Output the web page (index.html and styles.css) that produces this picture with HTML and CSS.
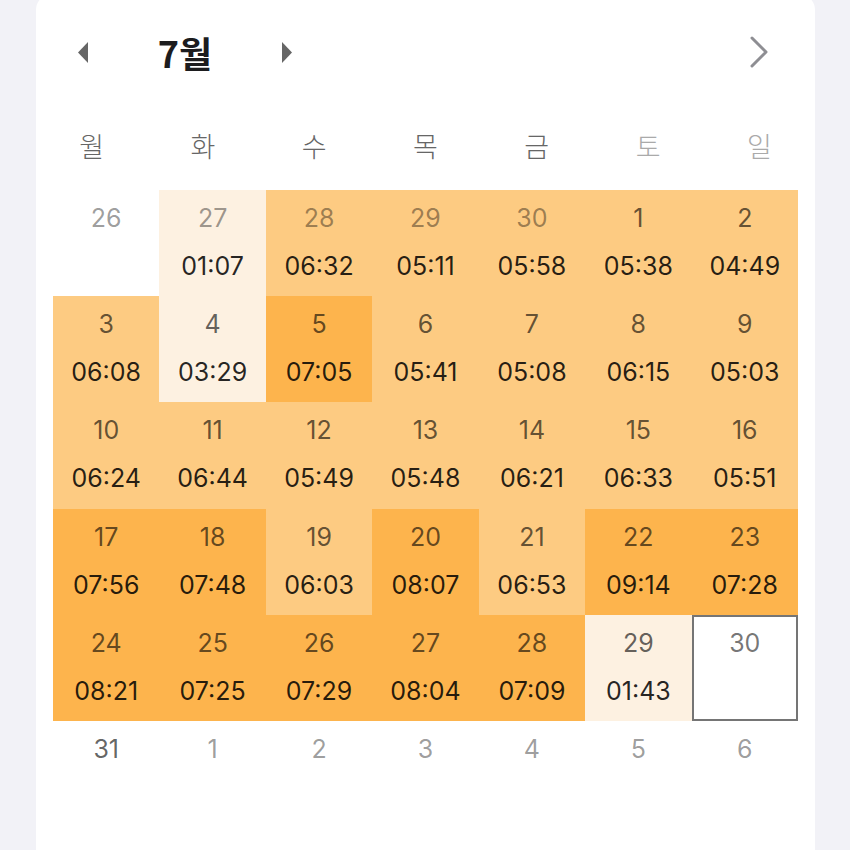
FILE: index.html
```html
<!DOCTYPE html>
<html lang="ko">
  <head>
    <meta charset="UTF-8" />
    <meta name="viewport" content="width=device-width, initial-scale=1.0" />
    <title>수면 기록</title>
    <link rel="stylesheet" href="styles.css">
  </head>
  <body>
    <div class="card">
      <div class="month-bar">
        <svg class="tri tri-left" width="10" height="21" viewBox="0 0 10 21"><polygon points="10,0 10,21 0,10.5" /></svg>
        <div class="month-title">7월</div>
        <svg class="tri" width="10" height="21" viewBox="0 0 10 21"><polygon points="0,0 0,21 10,10.5" /></svg>
        <svg class="chevron" width="20" height="32" viewBox="0 0 20 32"><polyline points="2,2 16,16 2,30" /></svg>
      </div>

      <div class="weekdays">
        <span>월</span><span>화</span><span>수</span><span>목</span><span>금</span>
        <span class="weekend">토</span><span class="weekend">일</span>
      </div>

      <div class="days">
        <div class="day other"><span class="num">26</span></div>
        <div class="day other lv1"><span class="num">27</span><span class="time">01:07</span></div>
        <div class="day other lv2"><span class="num">28</span><span class="time">06:32</span></div>
        <div class="day other lv2"><span class="num">29</span><span class="time">05:11</span></div>
        <div class="day other lv2"><span class="num">30</span><span class="time">05:58</span></div>
        <div class="day lv2"><span class="num">1</span><span class="time">05:38</span></div>
        <div class="day lv2"><span class="num">2</span><span class="time">04:49</span></div>

        <div class="day lv2"><span class="num">3</span><span class="time">06:08</span></div>
        <div class="day lv1"><span class="num">4</span><span class="time">03:29</span></div>
        <div class="day lv3"><span class="num">5</span><span class="time">07:05</span></div>
        <div class="day lv2"><span class="num">6</span><span class="time">05:41</span></div>
        <div class="day lv2"><span class="num">7</span><span class="time">05:08</span></div>
        <div class="day lv2"><span class="num">8</span><span class="time">06:15</span></div>
        <div class="day lv2"><span class="num">9</span><span class="time">05:03</span></div>

        <div class="day lv2"><span class="num">10</span><span class="time">06:24</span></div>
        <div class="day lv2"><span class="num">11</span><span class="time">06:44</span></div>
        <div class="day lv2"><span class="num">12</span><span class="time">05:49</span></div>
        <div class="day lv2"><span class="num">13</span><span class="time">05:48</span></div>
        <div class="day lv2"><span class="num">14</span><span class="time">06:21</span></div>
        <div class="day lv2"><span class="num">15</span><span class="time">06:33</span></div>
        <div class="day lv2"><span class="num">16</span><span class="time">05:51</span></div>

        <div class="day lv3"><span class="num">17</span><span class="time">07:56</span></div>
        <div class="day lv3"><span class="num">18</span><span class="time">07:48</span></div>
        <div class="day lv2"><span class="num">19</span><span class="time">06:03</span></div>
        <div class="day lv3"><span class="num">20</span><span class="time">08:07</span></div>
        <div class="day lv2"><span class="num">21</span><span class="time">06:53</span></div>
        <div class="day lv3"><span class="num">22</span><span class="time">09:14</span></div>
        <div class="day lv3"><span class="num">23</span><span class="time">07:28</span></div>

        <div class="day lv3"><span class="num">24</span><span class="time">08:21</span></div>
        <div class="day lv3"><span class="num">25</span><span class="time">07:25</span></div>
        <div class="day lv3"><span class="num">26</span><span class="time">07:29</span></div>
        <div class="day lv3"><span class="num">27</span><span class="time">08:04</span></div>
        <div class="day lv3"><span class="num">28</span><span class="time">07:09</span></div>
        <div class="day lv1"><span class="num">29</span><span class="time">01:43</span></div>
        <div class="day today"><span class="num">30</span></div>

        <div class="day"><span class="num">31</span></div>
        <div class="day other"><span class="num">1</span></div>
        <div class="day other"><span class="num">2</span></div>
        <div class="day other"><span class="num">3</span></div>
        <div class="day other"><span class="num">4</span></div>
        <div class="day other"><span class="num">5</span></div>
        <div class="day other"><span class="num">6</span></div>
      </div>
    </div>
  </body>
</html>
```

FILE: styles.css
```css
body {
  margin: 0;
  background-color: #f2f2f7;
  font-family: Inter, "Noto Sans CJK KR", sans-serif;
  overflow: hidden;
}

.card {
  margin: -6px 35px 0 36px;
  padding: 0 17px 80px;
  background-color: #fff;
  border-radius: 16px;
  min-height: 900px;
}

/* month header */
.month-bar {
  display: flex;
  align-items: center;
  height: 60px;
  padding-top: 28px;
}

.tri {
  fill: #666;
  flex: none;
}

.tri-left {
  margin-left: 25px;
}

.month-title {
  width: 194px;
  text-align: center;
  font-family: "Noto Sans CJK KR", sans-serif;
  font-weight: bold;
  font-size: 36px;
  color: #1c1c1e;
}

.chevron {
  margin-left: auto;
  margin-right: 28px;
  fill: none;
  stroke: #8e8e93;
  stroke-width: 3;
  stroke-linecap: round;
  stroke-linejoin: round;
}

/* weekday names span the whole card */
.weekdays {
  display: grid;
  grid-template-columns: repeat(7, 1fr);
  align-items: center;
  height: 108px;
  margin: 0 -17px;
  padding-top: 18px;
  box-sizing: border-box;
  text-align: center;
  font-family: "Noto Sans CJK KR", sans-serif;
  font-size: 27px;
  font-weight: 300;
  color: #666;
}

.weekdays .weekend {
  color: #aaa;
}

/* days grid */
.days {
  display: grid;
  grid-template-columns: repeat(7, 1fr);
  grid-auto-rows: 106.2px;
}

.day {
  display: flex;
  flex-direction: column;
  align-items: center;
  padding-top: 13px;
  gap: 18px;
  box-sizing: border-box;
}

.num {
  font-size: 25px;
  line-height: 30px;
  color: rgba(0, 0, 0, 0.62);
}

.other .num {
  color: rgba(0, 0, 0, 0.4);
}

.time {
  font-size: 25px;
  line-height: 30px;
  color: rgba(0, 0, 0, 0.86);
}

.lv1 {
  background-color: #fdf1e1;
}

.lv2 {
  background-color: #fdcb82;
}

.lv3 {
  background-color: #fdb44d;
}

.today {
  border: 2px solid #757575;
  padding-top: 11px;
}

.today .num {
  color: rgba(0, 0, 0, 0.55);
}
```
